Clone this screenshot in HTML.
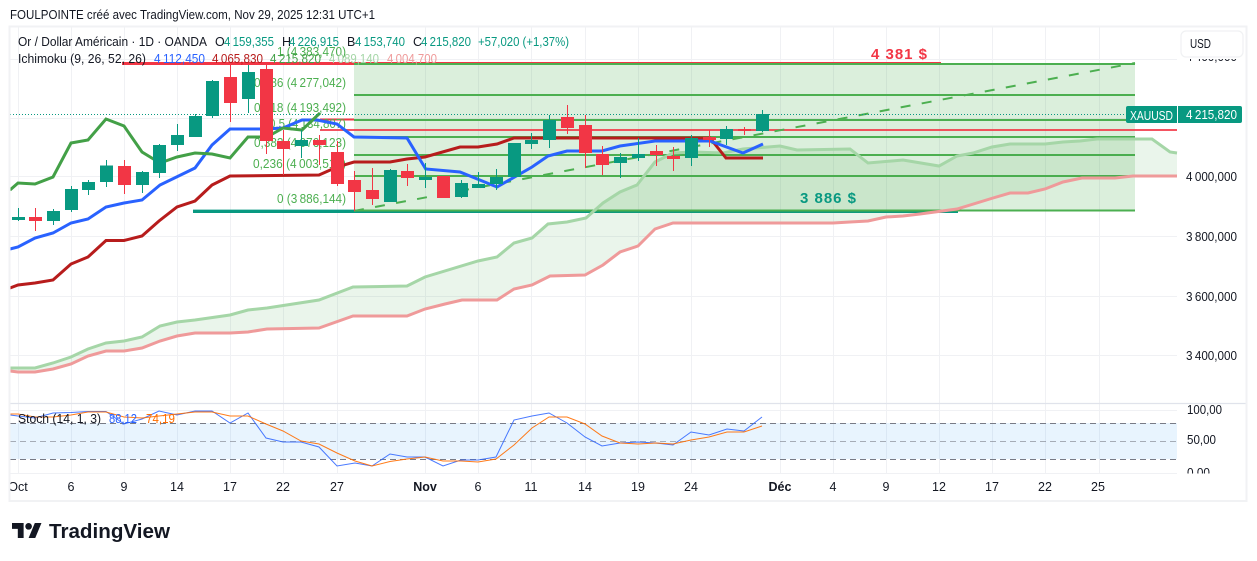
<!DOCTYPE html>
<html><head><meta charset="utf-8"><style>
html,body{margin:0;padding:0;background:#fff;width:1257px;height:561px;overflow:hidden}
svg{display:block}
text{font-family:"Liberation Sans",sans-serif;font-size:12.5px;fill:#131722}
.f text{fill:#4caf50;font-size:12.5px}
.g{fill:#089981!important}
.ax text{font-size:12.5px}
.t text{font-size:12.5px;text-anchor:middle}
</style></head><body>
<svg width="1257" height="561" viewBox="0 0 1257 561" xmlns="http://www.w3.org/2000/svg">
<text x="10" y="19" textLength="365" lengthAdjust="spacingAndGlyphs" style="font-size:12.5px">FOULPOINTE créé avec TradingView.com, Nov 29, 2025 12:31 UTC+1</text>
<!-- grid -->
<path stroke="#f0f1f4" stroke-width="1" fill="none" d="M18.5 27V473M71.5 27V473M124.5 27V473M177.5 27V473M230.5 27V473M283.5 27V473M337.5 27V473M425.5 27V473M478.5 27V473M531.5 27V473M585.5 27V473M638.5 27V473M691.5 27V473M780.5 27V473M833.5 27V473M886.5 27V473M939.5 27V473M992.5 27V473M1045.5 27V473M1099.5 27V473M10 59.5H1177M10 118.5H1177M10 176.5H1177M10 236.5H1177M10 296.5H1177M10 355.5H1177M10 410.5H1177M10 473.5H1177"/>
<!-- fib -->
<rect x="354" y="64" width="781" height="147" fill="#4caf50" fill-opacity=".2"/>
<!-- red/teal levels -->
<path d="M122 63.5H941" stroke="#f23645" stroke-width="3" fill="none"/>
<path d="M320 119.5H354" stroke="#f23645" stroke-width="2" fill="none"/>
<path d="M320 130H1177" stroke="#f23645" stroke-width="2" fill="none" opacity=".85"/>
<path d="M193 211.3H958" stroke="#089981" stroke-width="3.4" fill="none"/>
<path d="M354 64H1135M354 95H1135M354 120H1135M354 137H1135M354 155H1135M354 176H1135M354 210.5H1135" stroke="#4caf50" stroke-width="2" fill="none"/>
<path d="M354 211L1135 63" stroke="#4caf50" stroke-width="2" stroke-dasharray="10 11.4" fill="none"/>
<!-- fib labels -->
<g class="f">
<text x="277" y="56" textLength="69" lengthAdjust="spacingAndGlyphs">1 (4&#8201;383,470)</text>
<text x="254" y="87" textLength="92" lengthAdjust="spacingAndGlyphs">0,786 (4&#8201;277,042)</text>
<text x="254" y="112" textLength="92" lengthAdjust="spacingAndGlyphs">0,618 (4&#8201;193,492)</text>
<text x="269" y="128" textLength="77" lengthAdjust="spacingAndGlyphs">0,5 (4&#8201;134,807)</text>
<text x="254" y="147" textLength="92" lengthAdjust="spacingAndGlyphs">0,382 (4&#8201;076,123)</text>
<text x="253" y="168" textLength="93" lengthAdjust="spacingAndGlyphs">0,236 (4&#8201;003,517)</text>
<text x="277" y="203" textLength="69" lengthAdjust="spacingAndGlyphs">0 (3&#8201;886,144)</text>
</g>
<!-- cloud -->
<polygon fill="#43a047" fill-opacity=".11" points="11,368 35,368 53,363 71,357 88,349 106,343 124,341 142,337 160,326 177,322 195,320 230,315 248,310 267,308 319,300 353,287 407,286 425,277 478,261 497,257 514,243 532,238 548,224 567,222 586,218 603,203 620,192 637,185 655,162 673,153 693,152 723,153 743,149 780,146 797,150 850,149 868,163 903,160 939,166 957,156 973,153 992,147 1010,144 1045,144 1063,142 1080,141 1097,139 1152,139 1170,152 1177,153 1177,176 1133,176 1115,178 1082,178 1063,182 1045,189 1028,193 1010,193 993,198 957,209 920,214 903,216 886,217 868,221 850,222 833,223 673,223 655,229 638,246 620,252 603,265 585,275 550,276 532,285 514,289 497,300 462,300 445,304 425,309 407,316 353,316 319,328 267,329 248,332 230,333 195,333 177,336 160,341 142,348 124,351 106,351 88,356 71,364 53,369 35,372 18,372 11,371"/>
<polyline fill="none" stroke="#a5d6a7" stroke-width="3" points="10,368 35,368 53,363 71,357 88,349 106,343 124,341 142,337 160,326 177,322 195,320 230,315 248,310 267,308 319,300 353,287 407,286 425,277 478,261 497,257 514,243 532,238 548,224 567,222 586,218 603,203 620,192 637,185 655,162 673,153 693,152 723,153 743,149 780,146 797,150 850,149 868,163 903,160 939,166 957,156 973,153 992,147 1010,144 1045,144 1063,142 1080,141 1097,139 1152,139 1170,152 1177,153"/>
<polyline fill="none" stroke="#ef9a9a" stroke-width="3" points="10,371 18,372 35,372 53,369 71,364 88,356 106,351 124,351 142,348 160,341 177,336 195,333 230,333 248,332 267,329 319,328 353,316 407,316 425,309 445,304 462,300 497,300 514,289 532,285 550,276 585,275 603,265 620,252 638,246 655,229 673,223 833,223 850,222 868,221 886,217 903,216 920,214 957,209 993,198 1010,193 1028,193 1045,189 1063,182 1082,178 1115,178 1133,176 1177,176"/>
<polyline fill="none" stroke="#b71c1c" stroke-width="3" points="10,288 18,285 35,283 53,280 71,264 88,257 106,240.5 124,240.5 142,236 159,221 177,207 195,201 212,185 230,176 319,175 337,167 354,162 390,162 407,159 425,157 460,147 478,147 497,144 514,138 710,138 726,158 763,158"/>
<polyline fill="none" stroke="#2962ff" stroke-width="3" points="10,249 18,247 35,238 53,233 71,223 88,219 106,207 124,203 142,200 160,185 195,168 212,145 230,129 266,129 283,128 302,120 317,120 337,124 354,137 407,138 425.7,169 460,172 497,187 532,167 548,156 567,151 602,151 620,146 655,141 710,141 743,153 763,144"/>
<polyline fill="none" stroke="#43a047" stroke-width="3" points="10,190 18,183 35,184 53,177 71,143 88,140 106,119 124,126 142,152 160,163 177,157 195,153 212,154 230,158 248,137 267,137 283,128 302,130 320,113"/>
<!-- last price dotted -->
<path d="M10 114.5H1126" stroke="#089981" stroke-width="1" stroke-dasharray="1 2" fill="none"/>
<!-- candles green -->
<path stroke="#089981" stroke-width="1" fill="none" d="M18.5 208V221M53.5 209V225M71.5 186V212M88.5 180V195M106.5 160V187M142.5 171V193M159.5 144V178M177.5 124V151M195.5 114V137M212.5 80V118M248.5 65V113M301.5 130V158M390.5 169V202M425.5 163V188M461.5 180V198M478.5 172V188M496.5 169V190M531.5 133V149M549.5 115V148M620.5 153V178M638.5 138V161M691.5 135V166M726.5 126V145M762.5 110V132"/>
<path stroke="#f23645" stroke-width="1" fill="none" d="M35.5 208V231M124.5 160V194M230.5 65V122M266.5 65V154M283.5 130V175M319.5 135V165M337.5 141V186M354.5 171V211M372.5 168V205M407.5 164V186M567.5 105V134M585.5 115V168M602.5 146V175M656.5 145V166M673.5 147V171M709.5 130V147M744.5 127V135"/>
<g fill="#089981">
<rect x="12" y="217" width="13" height="3"/><rect x="47" y="211" width="13" height="10"/><rect x="65" y="189" width="13" height="21"/><rect x="82" y="182" width="13" height="8"/><rect x="100" y="165.5" width="13" height="16.5"/><rect x="136" y="172" width="13" height="13"/><rect x="153" y="145" width="13" height="28"/><rect x="171" y="135" width="13" height="10"/><rect x="189" y="116" width="13" height="21"/><rect x="206" y="81" width="13" height="35"/><rect x="242" y="72" width="13" height="27"/><rect x="295" y="140" width="13" height="6"/><rect x="384" y="170" width="13" height="32"/><rect x="419" y="177" width="13" height="3"/><rect x="455" y="183" width="13" height="14"/><rect x="472" y="184" width="13" height="4"/><rect x="490" y="177" width="13" height="7"/><rect x="508" y="143" width="13" height="34"/><rect x="525" y="140" width="13" height="4"/><rect x="543" y="120" width="13" height="20"/><rect x="614" y="157" width="13" height="6"/><rect x="632" y="154" width="13" height="4"/><rect x="685" y="138" width="13" height="20"/><rect x="720" y="129" width="13" height="10"/><rect x="756" y="114" width="13" height="17"/>
</g>
<g fill="#f23645">
<rect x="29" y="217" width="13" height="4"/><rect x="118" y="166" width="13" height="19"/><rect x="224" y="77" width="13" height="26"/><rect x="260" y="69" width="13" height="72"/><rect x="277" y="141" width="13" height="8"/><rect x="313" y="140" width="13" height="5"/><rect x="331" y="152" width="13" height="32"/><rect x="348" y="180" width="13" height="12"/><rect x="366" y="190" width="13" height="9"/><rect x="401" y="171" width="13" height="7"/><rect x="437" y="176" width="13" height="22"/><rect x="561" y="117" width="13" height="11"/><rect x="579" y="125" width="13" height="28"/><rect x="596" y="154" width="13" height="11"/><rect x="650" y="151" width="13" height="4"/><rect x="667" y="156" width="13" height="3"/><rect x="703" y="137" width="13" height="3"/><rect x="738" y="129" width="13" height="2"/>
</g>
<!-- big labels -->
<text x="871" y="59" textLength="56" style="font-size:15px;font-weight:bold;fill:#f23645">4 381 $</text>
<text x="800" y="203" textLength="56" style="font-size:15px;font-weight:bold;fill:#089981">3 886 $</text>
<!-- legend -->
<text x="18" y="46" textLength="189" lengthAdjust="spacingAndGlyphs">Or / Dollar Américain · 1D · OANDA</text>
<text x="215" y="46">O</text><text x="224" y="46" textLength="50" lengthAdjust="spacingAndGlyphs" class="g">4&#8201;159,355</text>
<text x="282" y="46">H</text><text x="289" y="46" textLength="50" lengthAdjust="spacingAndGlyphs" class="g">4&#8201;226,915</text>
<text x="347" y="46">B</text><text x="355" y="46" textLength="50" lengthAdjust="spacingAndGlyphs" class="g">4&#8201;153,740</text>
<text x="413" y="46">C</text><text x="421" y="46" textLength="50" lengthAdjust="spacingAndGlyphs" class="g">4&#8201;215,820</text>
<text x="478" y="46" textLength="91" lengthAdjust="spacingAndGlyphs" class="g">+57,020 (+1,37%)</text>
<text x="18" y="63" textLength="128" lengthAdjust="spacingAndGlyphs">Ichimoku (9, 26, 52, 26)</text>
<text x="154" y="63" textLength="51" lengthAdjust="spacingAndGlyphs" style="fill:#2962ff">4&#8201;112,450</text>
<text x="212" y="63" textLength="51" lengthAdjust="spacingAndGlyphs" style="fill:#b71c1c">4&#8201;065,830</text>
<text x="270" y="63" textLength="51" lengthAdjust="spacingAndGlyphs" style="fill:#43a047">4&#8201;215,820</text>
<text x="329" y="63" textLength="50" lengthAdjust="spacingAndGlyphs" style="fill:#a5d6a7">4&#8201;089,140</text>
<text x="387" y="63" textLength="50" lengthAdjust="spacingAndGlyphs" style="fill:#ef9a9a">4&#8201;004,700</text>
<!-- right scale -->
<g class="ax">
<text x="1186" y="61" textLength="51" lengthAdjust="spacingAndGlyphs">4&#8201;400,000</text>
<text x="1186" y="181" textLength="51" lengthAdjust="spacingAndGlyphs">4&#8201;000,000</text>
<text x="1186" y="241" textLength="51" lengthAdjust="spacingAndGlyphs">3&#8201;800,000</text>
<text x="1186" y="301" textLength="51" lengthAdjust="spacingAndGlyphs">3&#8201;600,000</text>
<text x="1186" y="360" textLength="51" lengthAdjust="spacingAndGlyphs">3&#8201;400,000</text>
</g>
<rect x="1178" y="28" width="68" height="31" fill="#fff"/>
<rect x="1181" y="31" width="62" height="26" rx="5" fill="#fff" stroke="#f0f1f3" stroke-width="1.2"/>
<text x="1190" y="48" textLength="21" lengthAdjust="spacingAndGlyphs">USD</text>
<!-- price tag -->
<path d="M1128 106H1177V123H1128a2 2 0 0 1-2-2V108a2 2 0 0 1 2-2z" fill="#089981"/>
<path d="M1178 106H1240a2 2 0 0 1 2 2V121a2 2 0 0 1-2 2H1178z" fill="#089981"/>
<text x="1130" y="120" textLength="43" lengthAdjust="spacingAndGlyphs" style="fill:#fff">XAUUSD</text>
<text x="1186" y="119" textLength="51" lengthAdjust="spacingAndGlyphs" style="fill:#fff">4&#8201;215,820</text>
<!-- stoch -->
<rect x="10" y="423" width="1167" height="36" fill="#2196f3" fill-opacity=".1"/>
<path d="M10 423.5H1177M10 459.5H1177" stroke="#787b86" stroke-dasharray="6 4" fill="none"/>
<path d="M10 441.5H1177" stroke="#787b86" stroke-opacity=".6" stroke-dasharray="6 4" fill="none"/>
<path d="M10 403.5H1246" stroke="#e0e3eb" stroke-width="1.2" fill="none"/>
<polyline fill="none" stroke="#2962ff" stroke-opacity=".85" stroke-width="1" points="10,415 18,416 35,418 53,413 71,412.5 88,411.5 106,411.5 124,424 142,419 159,411 177,415 195,411 212,411 230,423 248,413 266,438 283,442 301,442 319,447 337,466 355,463 372,466 390,454 407,457 425,457 443,466 461,460 478,460 496,457 514,420 532,416 549,413 567,423 585,437 602,446 620,443 638,442 656,443 673,445 691,432 709,435 727,429 744,431 762,417"/>
<polyline fill="none" stroke="#ff6d00" stroke-opacity=".9" stroke-width="1" points="10,414 18,414 35,417 53,417 71,415 88,412 106,412 124,417 142,418 159,416 177,414 195,412 212,412 230,416 248,416 266,424 283,431 301,441 319,444 337,453 355,461 372,466 390,461.5 407,459 425,457 443,461 461,461 478,462 496,459 514,445 532,428 549,417 567,417 585,424 602,436 620,443 638,444 656,443 673,444 691,440 709,437 727,432 744,432 762,426"/>
<text x="18" y="423" textLength="83" lengthAdjust="spacingAndGlyphs">Stoch (14, 1, 3)</text>
<text x="109" y="423" textLength="28" lengthAdjust="spacingAndGlyphs" style="fill:#2962ff">88,12</text>
<text x="146" y="423" textLength="29" lengthAdjust="spacingAndGlyphs" style="fill:#ff6d00">74,19</text>
<g class="ax">
<text x="1187" y="414" textLength="35" lengthAdjust="spacingAndGlyphs">100,00</text>
<text x="1187" y="444" textLength="29" lengthAdjust="spacingAndGlyphs">50,00</text>
<text x="1187" y="477" textLength="23" lengthAdjust="spacingAndGlyphs">0,00</text>
</g>
<rect x="1178" y="473.5" width="68" height="8" fill="#fff"/>
<!-- time axis -->
<g class="t">
<text x="18" y="491">Oct</text><text x="71" y="491">6</text><text x="124" y="491">9</text><text x="177" y="491">14</text><text x="230" y="491">17</text><text x="283" y="491">22</text><text x="337" y="491">27</text>
<text x="425" y="491" style="font-weight:bold">Nov</text><text x="478" y="491">6</text><text x="531" y="491">11</text><text x="585" y="491">14</text><text x="638" y="491">19</text><text x="691" y="491">24</text>
<text x="780" y="491" style="font-weight:bold">Déc</text><text x="833" y="491">4</text><text x="886" y="491">9</text><text x="939" y="491">12</text><text x="992" y="491">17</text><text x="1045" y="491">22</text><text x="1098" y="491">25</text>
</g>
<!-- frame -->
<rect x="0" y="20" width="9" height="490" fill="#fff"/>
<rect x="9.5" y="26.5" width="1237" height="474.5" fill="none" stroke="#f1f2f4" stroke-width="2"/>
<!-- logo -->
<g transform="translate(12 519.7) scale(.83)" fill="#131722">
<path d="M14 22H7V11H0V4h14v18zM28 22h-8l7.5-18h8L28 22z"/><circle cx="20" cy="8" r="4"/>
</g>
<text x="49" y="538" textLength="121" lengthAdjust="spacingAndGlyphs" style="font-size:20.5px;font-weight:bold;fill:#131722">TradingView</text>
</svg>
</body></html>
